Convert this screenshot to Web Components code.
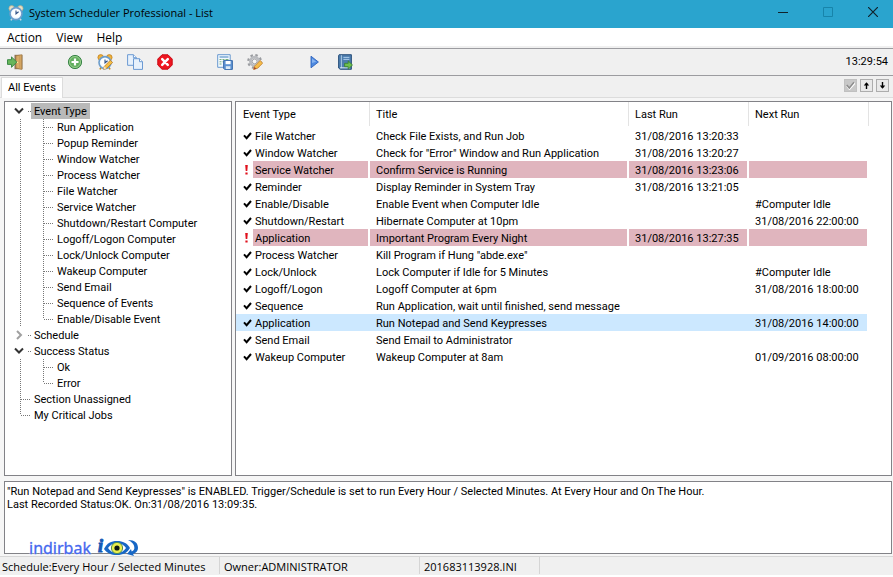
<!DOCTYPE html>
<html lang="en">
<head>
<meta charset="utf-8">
<title>System Scheduler Professional - List</title>
<style>
  html, body { margin: 0; min-height: 100%; background: #fff; }
  body {
    --ui: "Open Sans", "Noto Sans", sans-serif;
    --frame: #828287;
    font: 11px/16px Roboto, "Liberation Sans", sans-serif;
    color: #000;
  }
</style>
</head>
<body>
<scheduler-app></scheduler-app>
<script>
const define = (name, html, setup) => {
  const template = document.createElement('template');
  template.innerHTML = html;
  customElements.define(name, class extends HTMLElement {
    constructor() {
      super();
      this.attachShadow({ mode: 'open' }).append(template.content.cloneNode(true));
    }
    connectedCallback() {
      if (setup && !this.ready) { this.ready = true; setup(this, this.shadowRoot); }
    }
  });
};

const clock = `
  <path d="M4.5 13l-1.6 2.4M11.5 13l1.6 2.4" stroke="#c98a1b" stroke-width="1.6"/>
  <circle cx="3.7" cy="3.4" r="2.8" fill="#f0b23c" stroke="#b97a1c" stroke-width=".7"/>
  <circle cx="12.3" cy="3.4" r="2.8" fill="#f0b23c" stroke="#b97a1c" stroke-width=".7"/>
  <circle cx="8" cy="8.6" r="6" fill="#eef7ff" stroke="#6d9dcb" stroke-width="1.6"/>
  <circle cx="8" cy="8.6" r="4" fill="#fff"/>
  <path d="M8 5.4v3.4l2.6-2" fill="none" stroke="#2d4f86" stroke-width="1.1"/>`;
const pencil = `
  <path d="M13.4 6.2l2.2 2.4-6.1 5.8-3 .9.9-3z" fill="#f6bf45" stroke="#b5792a" stroke-width=".8"/>
  <path d="M6.5 15.3l.9-3 2.1 2.1z" fill="#f4e3c4"/>`;
const icons = {
  clock: clock.replace(/#f0b23c/g, '#e6e2c4').replace(/#b97a1c/g, '#a9a48d').replace(/#c98a1b/g, '#c8d6df'),
  exit: `<path d="M7.5.8h8v14.4h-8z" fill="#8b7458"/><path d="M9 1.8l5.8-1v14.6L9 14z" fill="#d9ab66" stroke="#a67a42" stroke-width=".7"/>
    <path d="M12.8 2v12.6" stroke="#c4955a" stroke-width=".8"/><circle cx="10.5" cy="8.4" r=".7" fill="#fff0a0"/>
    <path d="M.5 5.7h4V2.9l5.3 5.2-5.3 5.2v-2.9h-4z" fill="#68b65b" stroke="#3d8a48"/>`,
  add: `<circle cx="8" cy="8" r="6.6" fill="#62ae60" stroke="#398448"/><circle cx="8" cy="8" r="5.5" fill="none" stroke="#a6d79b" stroke-width=".8"/>
    <path d="M8 4.5v7M4.5 8h7" stroke="#fff" stroke-width="2.2"/>`,
  edit: clock + pencil,
  copy: `<g fill="#e7f1fc" stroke="#6c9ad3"><path d="M.6.7h5.8l3 3v7.6H.6z"/><path d="M6.4.7v3h3" fill="#fff"/>
    <path d="M6.5 4.7h6l3 3v7.7h-9z"/><path d="M12.5 4.7v3h3" fill="#fff"/></g>`,
  remove: `<path d="M5 .8h6L15.2 5v6L11 15.2H5L.8 11V5z" fill="#ee1620" stroke="#c90c16"/>
    <path d="M5.2 5.2l5.6 5.6M10.8 5.2l-5.6 5.6" stroke="#fff" stroke-width="2.5" stroke-linecap="round"/>`,
  save: `<path d="M.7.7h12.5v12.6H.7z" fill="#f3f9ff" stroke="#6798cf"/><path d="M2.5 3h9" stroke="#5c93c8" stroke-width="1.2"/>
    <path d="M2.5 5.5h2M5.5 5.5h2M8.5 5.5h3M2.5 7.8h2M5.5 7.8h2M2.5 10h2" stroke="#77ae7c"/>
    <path d="M6.6 6.6h8.8v8.8H7.6l-1-1z" fill="#5e93d3" stroke="#3c6ead"/><path d="M8.6 7h5v3.2h-5z" fill="#fff"/><path d="M8.8 12.2h4.6V15H8.8z" fill="#dcebf7"/>`,
  gear: `<circle cx="7.6" cy="7.4" r="6.2" fill="none" stroke="#9a9ca0" stroke-width="2.4" stroke-dasharray="2.4 2.47"/>
    <circle cx="7.6" cy="7.4" r="4.2" fill="#fff" stroke="#b9bbbf" stroke-width="2.8"/><circle cx="7.6" cy="7.4" r="2.4" fill="#f5f5f5" stroke="#818387" stroke-width=".7"/>
    <path d="M13.2 6.4l2.5 2.8-5.1 5-4 1.4.9-3.4z" fill="#f5bb48" stroke="#c08335" stroke-width=".8"/><path d="M6.6 15.6l.7-2.6 2.3 1.4z" fill="#a84a2d"/>`,
  play: `<path d="M4 2.2L11.4 8 4 13.8z" fill="#4e8ae0" stroke="#2c62bd" stroke-width=".9"/><path d="M5 4.4L9.2 7.8 5 9z" fill="#86b3f0"/>`,
  book: `<path d="M2.1.7h12.3v14.6H3.2L1.6 14V1.6z" fill="#4d7dae" stroke="#2c527d"/><path d="M4.4 1.2v13" stroke="#a8c6e0"/>
    <path d="M6.4 3.4h6M6.4 5.4h6" stroke="#a9cbea"/><path d="M3 13.8h10" stroke="#dbe9f5"/>
    <path d="M7.6 9.3h3.6V6.9l4.3 4.1-4.3 4.1v-2.4H7.6z" fill="#6fc04c" stroke="#377f2e" stroke-width=".8"/>`
};

define('app-icon', `<style>:host{display:block;width:16px;height:16px}svg{display:block;width:100%;height:100%}</style><svg viewBox="0 0 16 16" fill="none" aria-hidden="true"></svg>`,
  (host, root) => { root.querySelector('svg').innerHTML = icons[host.getAttribute('name')]; });

define('title-bar', `
<style>
  :host { display: flex; align-items: center; gap: 5px; height: 28px; padding-left: 8px; background: #2aa4ce; font-family: var(--ui); }
  h1 { flex: 1; margin: 0; padding-bottom: 2px; font: inherit; font-size: 11px; line-height: 16px; white-space: nowrap; }
  app-icon { margin-bottom: 3px; }
  button { width: 40px; height: 28px; padding: 0 0 4px; border: 0; background: none; display: grid; place-items: center; }
  svg { width: 10px; height: 10px; fill: none; stroke: #10222b; }
  button:disabled svg { stroke: #1784aa; }
</style>
<app-icon name="clock"></app-icon><h1><slot></slot></h1>
<button aria-label="Minimize"><svg viewBox="0 0 10 10"><path d="M0 5.5h10"/></svg></button>
<button aria-label="Maximize" disabled><svg viewBox="0 0 10 10"><path d="M.5.5h9v9h-9z"/></svg></button>
<button aria-label="Close"><svg viewBox="0 0 10 10"><path d="M0 0l10 10M10 0L0 10" stroke-width="1.2"/></svg></button>`);

define('menu-bar', `
<style>
  :host { display: flex; height: 18px; background: #fff; border-bottom: 2px solid #f0f0f0; padding-left: 1px; }
  button { border: 0; background: none; color: inherit; padding: 1px 6px 0; margin-right: 2px; font: 12px/18px var(--ui); }
</style>
<button>Action</button><button>View</button><button>Help</button>`);

define('tool-bar', `
<style>
  :host { display: flex; align-items: center; height: 26px; border: solid #9c9ca0; border-width: 1px 0; background: #f0f0f0; }
  button { width: 30px; height: 26px; border: 0; padding: 0; background: none; display: grid; place-items: center; }
  .gap { width: 30px; }
  time { margin-left: auto; padding-right: 5px; }
</style>
<button aria-label="Exit"><app-icon name="exit"></app-icon></button><span class="gap"></span>
<button aria-label="New event"><app-icon name="add"></app-icon></button>
<button aria-label="Edit event"><app-icon name="edit"></app-icon></button>
<button aria-label="Copy event"><app-icon name="copy"></app-icon></button>
<button aria-label="Delete event"><app-icon name="remove"></app-icon></button><span class="gap"></span>
<button aria-label="Save list"><app-icon name="save"></app-icon></button>
<button aria-label="Options"><app-icon name="gear"></app-icon></button><span class="gap"></span>
<button aria-label="Run now"><app-icon name="play"></app-icon></button>
<button aria-label="View log"><app-icon name="book"></app-icon></button>
<time>13:29:54</time>`);

define('tab-strip', `
<style>
  :host { display: flex; align-items: flex-end; height: 22px; background: linear-gradient(#dcdcdc, #dcdcdc) bottom / 100% 1px no-repeat #f0f0f0; }
  .tab { height: 21px; margin-left: 1px; padding: 0 6px; border: 1px solid #dcdcdc; border-bottom: 0; background: #fff; font: 11px/18px Roboto, sans-serif; color: inherit; }
  .tools { margin: 0 4px 6px auto; display: flex; gap: 3px; }
  .tools button { width: 13px; height: 13px; padding: 0; border: 1px solid #adadad; background: #e9e9e9; display: grid; place-items: center; }
  .tools button:disabled { background: #c8c8c8; border-color: #c0c0c0; }
  svg { width: 9px; height: 9px; fill: none; }
</style>
<button class="tab" role="tab" aria-selected="true">All Events</button>
<div class="tools">
  <button disabled aria-label="Apply"><svg viewBox="0 0 9 9"><path d="M1 5l2.5 3L9 2" stroke="#fff" stroke-width="1.8"/><path d="M.8 4l2.5 3L8 1.2" stroke="#8c8c8c" stroke-width="1.5"/></svg></button>
  <button aria-label="Move up"><svg viewBox="0 0 9 9"><path d="M4.5 8V2" stroke="#000" stroke-width="1.4"/><path d="M1.8 4.4L4.5 1.2l2.7 3.2z" fill="#000"/></svg></button>
  <button aria-label="Move down"><svg viewBox="0 0 9 9"><path d="M4.5 1v6" stroke="#000" stroke-width="1.4"/><path d="M1.8 4.6l2.7 3.2 2.7-3.2z" fill="#000"/></svg></button>
</div>`);

define('tree-row', `
<style>
  :host { display: flex; height: 16px; white-space: nowrap; }
  button, .guide { flex: none; width: 26px; height: 16px; border: 0; padding: 0; background: none; }
  .guide { display: block; }
  .guide.child { width: 49px; }
  svg { display: block; fill: none; }
  .label { box-sizing: border-box; height: 16px; padding: 1px 3px 0; }
  :host([selected]) .label { background: #b9b9b9; }
</style>
<span class="label"><slot></slot></span>`,
  (host, root) => {
    const kind = host.getAttribute('kind');
    const dots = 'stroke="#777" stroke-dasharray="1 1" shape-rendering="crispEdges"';
    const shapes = {
      open: `<path d="M10 5.5l4 4 4-4" stroke="#333" stroke-width="2"/><path d="M23 8.5h3" ${dots}/>`,
      shut: `<path d="M12 4l4 4-4 4" stroke="#a0a0a0" stroke-width="2"/><path d="M23 8.5h3" ${dots}/>`,
      leaf: `<path d="M15.5 0v16M16 8.5h10" ${dots}/>`,
      end: `<path d="M15.5 0v8M16 8.5h10" ${dots}/>`,
      child: `<path d="M15.5 0v16M38.5 0v16M39 8.5h10" ${dots}/>`,
      last: `<path d="M15.5 0v16M38.5 0v8M39 8.5h10" ${dots}/>`
    };
    const toggles = kind === 'open' || kind === 'shut';
    const nested = kind === 'child' || kind === 'last';
    const guide = document.createElement(toggles ? 'button' : 'span');
    if (toggles) guide.setAttribute('aria-label', kind === 'open' ? 'Collapse' : 'Expand');
    else guide.className = 'guide' + (nested ? ' child' : '');
    const w = nested ? 49 : 26;
    guide.innerHTML = `<svg width="${w}" height="16" viewBox="0 0 ${w} 16" aria-hidden="true">${shapes[kind]}</svg>`;
    root.querySelector('.label').before(guide);
  });

const tree = [
  ['open', 'Event Type'], ['child', 'Run Application'], ['child', 'Popup Reminder'], ['child', 'Window Watcher'],
  ['child', 'Process Watcher'], ['child', 'File Watcher'], ['child', 'Service Watcher'], ['child', 'Shutdown/Restart Computer'],
  ['child', 'Logoff/Logon Computer'], ['child', 'Lock/Unlock Computer'], ['child', 'Wakeup Computer'], ['child', 'Send Email'],
  ['child', 'Sequence of Events'], ['last', 'Enable/Disable Event'], ['shut', 'Schedule'], ['open', 'Success Status'],
  ['child', 'Ok'], ['last', 'Error'], ['leaf', 'Section Unassigned'], ['end', 'My Critical Jobs']
];
define('event-tree', `
<style>:host { display: block; padding-top: 1px; border: 1px solid var(--frame); background: #fff; overflow: hidden; }</style>
${tree.map(([k, t], i) => `<tree-row kind="${k}"${i ? '' : ' selected'}>${t}</tree-row>`).join('')}`);

const rows = [
  ['', 'File Watcher', 'Check File Exists, and Run Job', '31/08/2016 13:20:33', ''],
  ['', 'Window Watcher', 'Check for "Error" Window and Run Application', '31/08/2016 13:20:27', ''],
  ['alert', 'Service Watcher', 'Confirm Service is Running', '31/08/2016 13:23:06', ''],
  ['', 'Reminder', 'Display Reminder in System Tray', '31/08/2016 13:21:05', ''],
  ['', 'Enable/Disable', 'Enable Event when Computer Idle', '', '#Computer Idle'],
  ['', 'Shutdown/Restart', 'Hibernate Computer at 10pm', '', '31/08/2016 22:00:00'],
  ['alert', 'Application', 'Important Program Every Night', '31/08/2016 13:27:35', ''],
  ['', 'Process Watcher', 'Kill Program if Hung "abde.exe"', '', ''],
  ['', 'Lock/Unlock', 'Lock Computer if Idle for 5 Minutes', '', '#Computer Idle'],
  ['', 'Logoff/Logon', 'Logoff Computer at 6pm', '', '31/08/2016 18:00:00'],
  ['', 'Sequence', 'Run Application, wait until finished, send message', '', ''],
  ['selected', 'Application', 'Run Notepad and Send Keypresses', '', '31/08/2016 14:00:00'],
  ['', 'Send Email', 'Send Email to Administrator', '', ''],
  ['', 'Wakeup Computer', 'Wakeup Computer at 8am', '', '01/09/2016 08:00:00']
];
const tick = '<svg viewBox="0 0 9 8" width="9" height="8" role="img" aria-label="Enabled"><path d="M1 3.4l2.6 2.8L8 1" stroke="#000" stroke-width="2" fill="none"/></svg>';
const bang = '<svg viewBox="0 0 9 10" width="9" height="10" role="img" aria-label="Alert"><path d="M2.2 0h2.6l-.5 6H2.7zM2.4 7.4h2.2v2H2.4z" fill="#e0101c"/></svg>';
define('event-list', `
<style>
  :host { display: block; border: 1px solid var(--frame); background: #fff; overflow: hidden; }
  table { width: 100%; table-layout: fixed; border-collapse: separate; border-spacing: 0; white-space: nowrap; }
  .c-icon { width: 17px } .c-type { width: 117px } .c-title { width: 259px } .c-run { width: 120px }
  th { box-sizing: border-box; height: 25px; padding: 1px 6px 0; font-weight: normal; text-align: left; background: linear-gradient(#e3e3e3, #e3e3e3) right top / 1px 24px no-repeat; }
  th:first-child { padding-left: 7px; }
  th.rest { background: none; }
  td { box-sizing: border-box; height: 17px; padding: 2px 4px 0 6px; line-height: 15px; border-right: 2px solid transparent; background-clip: padding-box; }
  td:first-child { padding: 0 0 0 7px; border: 0; }
  td:nth-child(2) { padding-left: 2px; }
  td svg { display: block; }
  tr.alert td:nth-child(n+2):nth-child(-n+5) { background-color: #e0b5be; }
  tr.selected td:nth-child(-n+4) { background: #cce8ff border-box; }
  tr.selected td:nth-child(5) { background: #cce8ff padding-box; }
</style>
<table>
  <colgroup><col class="c-icon"><col class="c-type"><col class="c-title"><col class="c-run"><col class="c-run"><col></colgroup>
  <thead><tr><th colspan="2">Event Type</th><th>Title</th><th>Last Run</th><th>Next Run</th><th class="rest"></th></tr></thead>
  <tbody>${rows.map(([c, ...t]) => `<tr class="${c}"><td>${c === 'alert' ? bang : tick}</td>${t.map(x => `<td>${x}</td>`).join('')}<td></td></tr>`).join('')}</tbody>
</table>`);

define('event-summary', `
<style>
  :host { display: block; }
  textarea { display: block; box-sizing: border-box; width: 100%; height: 73px; margin: 0; padding: 3px 2px; border: 1px solid var(--frame); border-radius: 0; outline: 0; resize: none; overflow: hidden; background: #fff; color: inherit; font: 11px/13px Roboto, sans-serif; }
</style>
<textarea readonly aria-label="Event details">"Run Notepad and Send Keypresses" is ENABLED. Trigger/Schedule is set to run Every Hour / Selected Minutes. At Every Hour and On The Hour.
Last Recorded Status:OK. On:31/08/2016 13:09:35.</textarea>`);

define('site-mark', `
<style>
  :host { display: flex; align-items: center; gap: 6px; color: #4468ee; font: 16px/18px "Noto Sans", sans-serif; -webkit-text-stroke: 0.3px #4468ee; text-shadow: 0 0 1px #fff, 0 0 2px #fff; }
  svg { display: block; width: 42px; height: 20px; overflow: visible; text-shadow: none; }
  text { font: italic bold 18px "Liberation Serif", serif; }
</style>
<span>indirbak</span>
<svg viewBox="0 0 42 20" aria-hidden="true">
  <text x="1" y="14" fill="#1459b5" stroke="#1459b5">i</text>
  <path d="M7 11C10 5 14 3 20 3s10 2 13 7c-3 5-7 7-13 7S10 15 7 11z" fill="#1767c5"/>
  <path d="M11 10c2-3 5-5 9-5s7 2 9 5c-2 3-5 5-9 5s-7-2-9-5z" fill="#fff"/>
  <circle cx="20" cy="10" r="5.6" fill="#e9ee4d" stroke="#4f8c50"/><circle cx="20" cy="10" r="2.6" fill="#101810"/>
  <path d="M31 2c7 0 10 3 10 8 0 3-2 5-5 6l1 2-7-2 4-5 .7 2.5c2-1 3-2 2.6-4.5C37 6 35 4 31 2z" fill="#1767c5"/>
</svg>`);

define('status-bar', `
<style>
  :host { display: flex; height: 18px; border-top: 1px solid #d7d7d7; background: #f0f0f0; font-family: var(--ui); white-space: nowrap; }
  span { box-sizing: border-box; height: 17px; padding: 2px 0 0 4px; border-right: 1px solid #d5d5d5; }
  .a { width: 220px; padding-left: 2px; } .b { width: 200px; } .c { width: 120px; }
</style>
<span class="a">Schedule:Every Hour / Selected Minutes</span><span class="b">Owner:ADMINISTRATOR</span><span class="c">201683113928.INI</span>`);

define('scheduler-app', `
<style>
  :host { display: flex; flex-direction: column; box-sizing: border-box; min-height: 100vh; padding-bottom: 2px; }
  main { flex: 1; display: flex; flex-direction: column; gap: 5px; padding: 3px 1px 2px 4px; background: #f6f6f6; }
  .panes { flex: 1; display: grid; grid-template-columns: 228px minmax(0, 1fr); gap: 3px; }
  .details { position: relative; }
  site-mark { position: absolute; left: 25px; bottom: -4px; }
</style>
<title-bar>System Scheduler Professional - List</title-bar>
<menu-bar></menu-bar>
<tool-bar></tool-bar>
<tab-strip></tab-strip>
<main>
  <div class="panes"><event-tree></event-tree><event-list></event-list></div>
  <div class="details"><event-summary></event-summary><site-mark></site-mark></div>
</main>
<status-bar></status-bar>`);
</script>
</body>
</html>
